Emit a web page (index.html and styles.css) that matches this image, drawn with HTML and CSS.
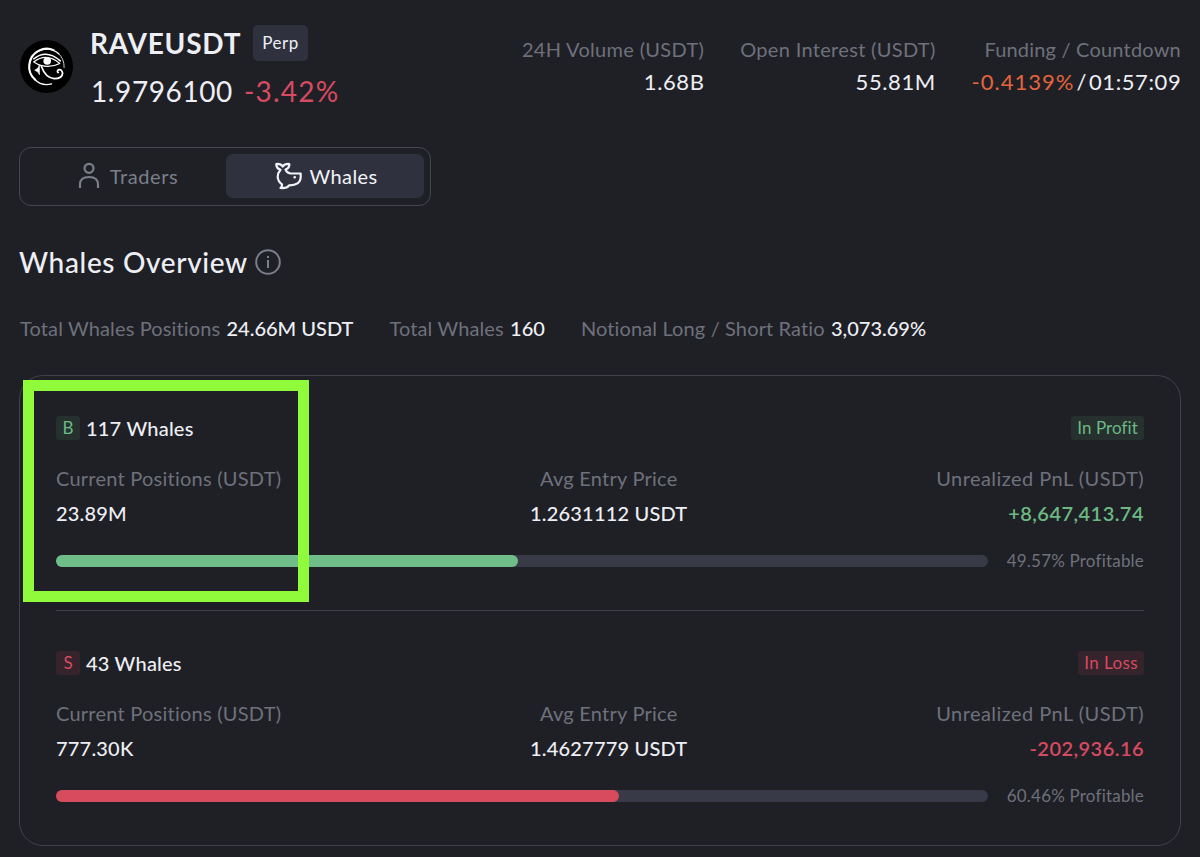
FILE: index.html
```
<!DOCTYPE html>
<html lang="en">
<head>
    <meta charset="UTF-8">
    <meta name="viewport" content="width=device-width, initial-scale=1.0">
    <title>RAVEUSDT Whales</title>
    <link rel="stylesheet" href="styles.css">
</head>
<body>
    <!-- Symbol, price and market stats -->
    <header>
        <svg class="logo" viewBox="0 0 52 52">
            <circle cx="26" cy="26" r="26" fill="#000"/>
            <g fill="none" stroke="#fff" stroke-linecap="round" stroke-linejoin="round">
                <path d="M38 13.500A17.300 17.300 0 1 0 31 43" stroke-width="1.300"/>
                <path d="M33 10Q26 6.500 18.500 10.500A17.300 17.300 0 0 0 15 39" stroke-width="2"/>
                <path d="M38 13.500Q43.500 18.500 43.300 27" stroke-width=".8"/>
                <path d="M13.500 18.500Q26 8.500 39.500 20.500" stroke-width="1.500"/>
                <path d="M13.500 21.500Q26 12 39 23Q26 29.500 13.500 21.500" stroke-width="1.200"/>
                <path d="M21 26Q25 37 33.500 38Q41.500 38 41.800 32.500Q41 28.300 37.500 29.300Q36 31 37.500 32" stroke-width="1.700"/>
                <path d="M19 25V34Q18.500 31 14.500 29.700Q18 28.500 19 25" stroke-width=".7" fill="#fff"/>
            </g>
            <circle cx="26.700" cy="20.700" r="3.700" fill="#fff"/>
        </svg>
        <div class="symbol">
            <div class="symbol-row">
                <h1>RAVEUSDT</h1>
                <span class="perp">Perp</span>
            </div>
            <div class="price-row">
                <span class="price">1.9796100</span>
                <span class="change">-3.42%</span>
            </div>
        </div>
        <div class="stats">
            <div class="stat">
                <span class="stat-label">24H Volume (USDT)</span>
                <span class="stat-value">1.68B</span>
            </div>
            <div class="stat">
                <span class="stat-label">Open Interest (USDT)</span>
                <span class="stat-value">55.81M</span>
            </div>
            <div class="stat">
                <span class="stat-label countdown">Funding / Countdown</span>
                <span class="stat-value"><span class="funding">-0.4139%</span><span class="slash">/</span>01:57:09</span>
            </div>
        </div>
    </header>

    <!-- Tabs -->
    <nav>
        <a class="tab">
            <svg width="22" height="28" viewBox="0 0 22 28" fill="none" stroke="currentColor" stroke-width="2.200">
                <circle cx="11" cy="6.300" r="4.500"/>
                <path d="M2 26V22.500Q2 15 11 15Q20 15 20 22.500V26"/>
            </svg>
            <span class="tab-text">Traders</span>
        </a>
        <a class="tab active">
            <svg width="28" height="28" viewBox="0 0 28 28" fill="none" stroke="currentColor" stroke-width="2.200" stroke-linejoin="round" stroke-linecap="round">
                <path d="M8.700 4.500Q7 1.700 2.300 2Q2 6 6.500 7.800Q3.700 11 3.700 15Q4 19.500 8 22.300Q8.300 24.500 6.500 26Q13 26.500 15 23.300C22 23.500 26.700 21 26.700 14.500V11.500H16.500Q12.500 11 11.500 7.500Q15.700 6 15.300 2Q10.500 1.700 8.700 4.500"/>
                <circle cx="20.700" cy="15.300" r="1.300" fill="currentColor" stroke="none"/>
            </svg>
            <span class="tab-text">Whales</span>
        </a>
    </nav>

    <!-- Overview title -->
    <h2>
        <span class="title">Whales Overview</span>
        <svg width="26" height="26" viewBox="0 0 26 26" fill="none" stroke="#7b7e8b" stroke-width="2">
            <circle cx="13" cy="13" r="11.800"/>
            <path d="M13 11V19M13 7V9"/>
        </svg>
    </h2>

    <div class="totals">
        <p>Total Whales Positions <b>24.66M USDT</b></p>
        <p>Total Whales <b>160</b></p>
        <p>Notional Long / Short Ratio <b>3,073.69%</b></p>
    </div>

    <!-- Long and short whales -->
    <main>
        <section class="long">
            <div class="top">
                <span class="side">B</span>
                <h3>117 Whales</h3>
                <span class="tag">In Profit</span>
            </div>
            <div class="figures">
                <div class="figure">
                    <span class="label">Current Positions (USDT)</span>
                    <span class="value">23.89M</span>
                </div>
                <div class="figure">
                    <span class="label">Avg Entry Price</span>
                    <span class="value">1.2631112 USDT</span>
                </div>
                <div class="figure">
                    <span class="label">Unrealized PnL (USDT)</span>
                    <span class="value pnl">+8,647,413.74</span>
                </div>
            </div>
            <div class="progress">
                <div class="track"><div class="fill" style="width: 49.57%"></div></div>
                <span class="percent">49.57% Profitable</span>
            </div>
        </section>
        <section class="short">
            <div class="top">
                <span class="side">S</span>
                <h3>43 Whales</h3>
                <span class="tag">In Loss</span>
            </div>
            <div class="figures">
                <div class="figure">
                    <span class="label">Current Positions (USDT)</span>
                    <span class="value">777.30K</span>
                </div>
                <div class="figure">
                    <span class="label">Avg Entry Price</span>
                    <span class="value">1.4627779 USDT</span>
                </div>
                <div class="figure">
                    <span class="label">Unrealized PnL (USDT)</span>
                    <span class="value pnl">-202,936.16</span>
                </div>
            </div>
            <div class="progress">
                <div class="track"><div class="fill" style="width: 60.46%"></div></div>
                <span class="percent">60.46% Profitable</span>
            </div>
        </section>
        <div class="highlight"></div>
    </main>
</body>
</html>
```
FILE: styles.css
```
* {
    box-sizing: border-box;
}

body {
    margin: 0;
    padding: 25px 19px 0 19px;
    height: 857px;
    overflow: hidden;
    background-color: #1f2025;
    color: #eeeff5;
    font-family: Lato, "Liberation Sans", sans-serif;
    font-size: 20px;
    font-variant-ligatures: none;
    white-space: nowrap;
}

h1, h2, h3, p {
    margin: 0;
}

svg {
    flex: none;
}

/* Header styles */
header {
    display: flex;
    height: 84px;
}

.logo {
    width: 53px;
    height: 53px;
    margin: 15px 17px 0 1px;
}

.symbol-row {
    display: flex;
    align-items: center;
    height: 36px;
}

h1 {
    width: 163px;
    font-size: 28px;
    line-height: 36px;
    letter-spacing: 0.8px;
}

.perp {
    width: 55px;
    height: 36px;
    border-radius: 5px;
    background-color: #2f323e;
    font-size: 17px;
    line-height: 36px;
    letter-spacing: 0.5px;
    text-align: center;
}

.price-row {
    display: flex;
    gap: 11px;
    margin-top: 12px;
    padding-left: 1px;
    font-size: 28px;
    line-height: 36px;
    letter-spacing: 0.6px;
}

.change {
    color: #d84a61;
    letter-spacing: 1.2px;
}

.stats {
    display: flex;
    gap: 36px;
    margin-left: auto;
    padding-top: 8px;
}

.stat {
    display: flex;
    flex-direction: column;
    text-align: right;
}

.stat-label {
    color: #6e717c;
    line-height: 32px;
    letter-spacing: 0.32px;
}

.countdown {
    letter-spacing: 0.2px;
}

.stat-value {
    margin-right: -0.3px;
    font-size: 22px;
    line-height: 33px;
    letter-spacing: 0.6px;
}

.funding {
    color: #e4643c;
    letter-spacing: 1px;
}

.slash {
    margin: 0 2px;
}

/* Tabs */
nav {
    display: flex;
    width: 412px;
    height: 59px;
    margin-top: 38px;
    padding: 6px 6px 7px;
    border: 1.5px solid #444650;
    border-radius: 12px;
}

.tab {
    display: flex;
    align-items: center;
    justify-content: center;
    gap: 10px;
    width: 200px;
    padding-left: 4px;
    border-radius: 7px;
    color: #7b7e8b;
    line-height: 24px;
    letter-spacing: 0.6px;
}

.tab-text {
    margin-bottom: 1px;
}

.tab.active {
    gap: 7px;
    width: 198px;
    padding-left: 2px;
    background-color: #2f323e;
    color: #f3f4fa;
    letter-spacing: 0.4px;
}

/* Overview */
h2 {
    display: flex;
    align-items: center;
    gap: 7px;
    height: 36px;
    margin-top: 38px;
    font-size: 28px;
    font-weight: 500;
    letter-spacing: 0.65px;
}

.totals {
    display: flex;
    gap: 36px;
    margin: 36px 0 0 1px;
    color: #6e717c;
    line-height: 24px;
    letter-spacing: 0.13px;
}

.totals b {
    margin-left: 1px;
    color: #eeeff5;
    font-weight: 500;
    letter-spacing: 0;
}

/* Whales card */
main {
    position: relative;
    height: 471px;
    margin-top: 35px;
    padding: 0 36px;
    border: 1.5px solid #3f414b;
    border-radius: 24px;
}

section {
    height: 235px;
    padding-top: 40px;
}

section.long {
    border-bottom: 1.5px solid #3f414b;
}

.top {
    display: flex;
    align-items: center;
    height: 24px;
}

.side {
    width: 24px;
    height: 24px;
    border-radius: 3px;
    font-size: 17px;
    line-height: 24px;
    text-align: center;
}

h3 {
    margin: 0 0 1px 6px;
    font-size: 20px;
    font-weight: 500;
    letter-spacing: 0.2px;
}

.tag {
    margin-left: auto;
    padding: 0 6px;
    border-radius: 3px;
    font-size: 17px;
    line-height: 24px;
    letter-spacing: 0.1px;
}

.long .side, .long .tag {
    background-color: #25302f;
    color: #6cb983;
}

.short .side, .short .tag {
    background-color: #35242c;
    color: #d84a61;
}

.short .tag {
    letter-spacing: 0.4px;
}

.figures {
    display: flex;
    justify-content: space-between;
    margin-top: 24px;
}

.figure {
    display: flex;
    flex-direction: column;
    gap: 7px;
    line-height: 28px;
    text-align: center;
}

.figure:first-child {
    text-align: left;
}

.figure:last-child {
    text-align: right;
}

.label {
    color: #6e717c;
    letter-spacing: 0.24px;
}

.figure:last-child .label {
    letter-spacing: 0.45px;
}

.value {
    font-weight: 500;
    letter-spacing: 0.2px;
}

.value.pnl {
    font-weight: 600;
    letter-spacing: 0.45px;
}

.long .pnl {
    color: #6cb983;
}

.short .pnl {
    color: #d84a61;
}

.progress {
    display: flex;
    align-items: center;
    height: 24px;
    margin-top: 22px;
}

.track {
    width: 932px;
    height: 12px;
    border-radius: 6px;
    background-color: #383b47;
}

.fill {
    height: 12px;
    border-radius: 6px;
    background-color: #6fbd88;
}

.short .fill {
    background-color: #d84a5e;
}

.percent {
    margin-left: auto;
    color: #6e717c;
    font-size: 17px;
    line-height: 24px;
    letter-spacing: 0.2px;
}

/* Marker box drawn over the long positions */
.highlight {
    position: absolute;
    left: 3px;
    top: 4px;
    width: 286px;
    height: 222px;
    border: 11px solid #90fb3b;
}
```
